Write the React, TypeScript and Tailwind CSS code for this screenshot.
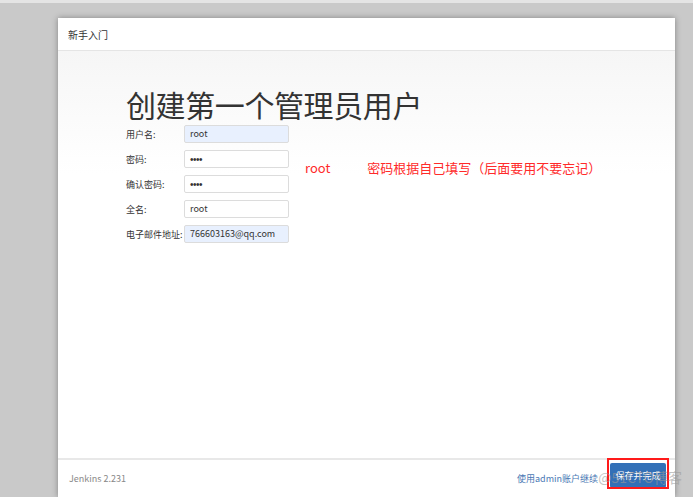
import React from "react";

const font = { fontFamily: '"Noto Sans CJK SC", "Noto Sans", sans-serif' };

const Field = ({ label, value, filled, secret }: { label: string; value: string; filled?: boolean; secret?: boolean }) => {
  return (
    <div className="flex items-center h-[18px]">
      <div className="w-[58px] text-[9px] text-[#333] leading-none">{label}</div>
      <div
        className={`w-[105px] h-[18px] border border-[#dcdcdc] rounded-[2px] flex items-center px-[5px] text-[9px] text-[#333] ${
          filled ? "bg-[#e8f0fe]" : "bg-white"
        }`}
      >
        {secret ? (
          <span className="font-['Liberation_Sans'] text-[10px] tracking-[-0.5px]">{value}</span>
        ) : (
          value
        )}
      </div>
    </div>
  );
};

const App = () => {
  return (
    <div className="h-[497px] w-[693px] bg-[#c9c9c9] overflow-hidden border-t-[3px] border-[#e4e4e4]" style={font}>
      <div className="ml-[58px] mt-[15px] w-[617px] h-[479px] bg-white flex flex-col shadow-[0_0_6px_rgba(0,0,0,0.35)]">
        <div className="h-[33px] border-b border-[#e5e5e5] flex items-center pl-[10px] text-[10px] text-[#333]">
          新手入门
        </div>

        <div className="h-[407px] bg-gradient-to-b from-[#f6f6f6] to-white to-[30%] pl-[68px] pt-[36px]">
          <h1 className="text-[30px] leading-[34px] text-[#333] tracking-[-0.4px]">创建第一个管理员用户</h1>
          <div className="flex mt-[4px]">
            <div className="flex flex-col gap-[7px]">
              <Field label="用户名:" value="root" filled />
              <Field label="密码:" value="••••" secret />
              <Field label="确认密码:" value="••••" secret />
              <Field label="全名:" value="root" />
              <Field label="电子邮件地址:" value="766603163@qq.com" filled />
            </div>
            <div className="flex pt-[36px] text-[13px] leading-none text-[#ff2a2a]">
              <span className="ml-[16px]">root</span>
              <span className="ml-[37px]">密码根据自己填写（后面要用不要忘记）</span>
            </div>
          </div>
        </div>

        <div className="flex-1 border-t-2 border-[#e8e8e8] flex items-center justify-between pl-[11px] pr-[9px] relative">
          <span className="text-[9px] text-[#888]">Jenkins 2.231</span>
          <div className="flex items-center">
            <span className="text-[9px] text-[#4a78b4] mr-[12px]">使用admin账户继续</span>
            <div className="w-[56px] h-[25px] bg-[#3370b7] rounded-[2px] text-white text-[9px] flex items-center justify-center mb-[6px]">
              保存并完成
            </div>
          </div>
          <div className="absolute right-[6px] top-[-2px] w-[62px] h-[31px] border-2 border-[#ff1a1a]" />
          <span className="absolute right-[-7px] top-[10px] text-[14px] text-[#9a9a9a]/60 leading-none">@51CTO博客</span>
        </div>
      </div>
    </div>
  );
};

export default App;
